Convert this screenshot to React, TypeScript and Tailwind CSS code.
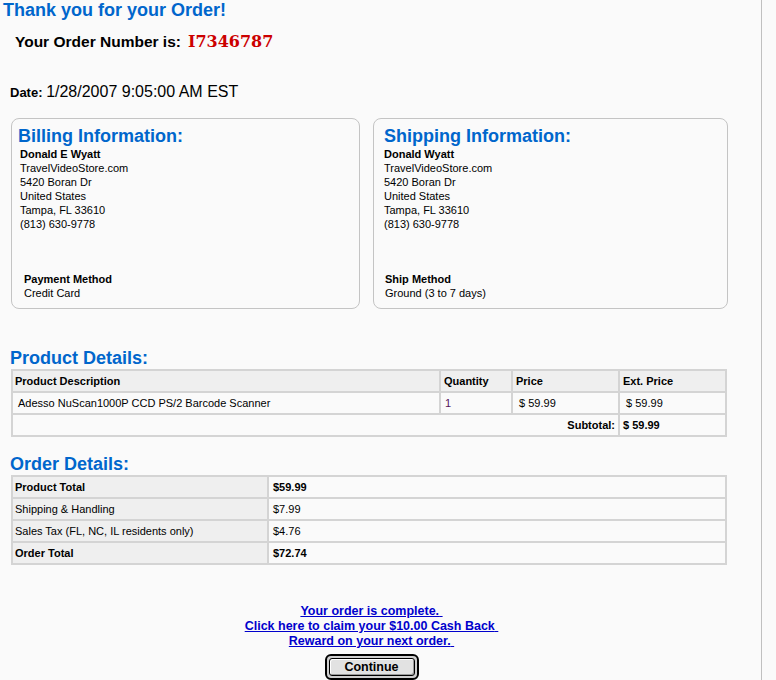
const billing = ["TravelVideoStore.com", "5420 Boran Dr", "United States", "Tampa, FL 33610", "(813) 630-9778"];

const InfoBox = ({
  title,
  name,
  methodLabel,
  method,
  width,
  pad,
  lineIndent,
  methodIndent,
}: {
  title: string;
  name: string;
  methodLabel: string;
  method: string;
  width: string;
  pad: string;
  lineIndent: string;
  methodIndent: string;
}) => {
  return (
    <div className={`${width} ${pad} flex h-[191px] flex-col rounded-[8px] border border-[#c4c4c4] pt-[7px] pb-[8px]`}>
      <h2 className="text-[18px] leading-[21px] font-bold text-[#0066cc]">{title}</h2>
      <div className={`${lineIndent} text-[11px] leading-[14px]`}>
        <div className="font-bold">{name}</div>
        {billing.map((l) => (
          <div key={l}>{l}</div>
        ))}
      </div>
      <div className={`${methodIndent} mt-auto text-[11px] leading-[14px]`}>
        <div className="font-bold">{methodLabel}</div>
        <div>{method}</div>
      </div>
    </div>
  );
};

const orderRows = [
  { label: "Product Total", value: "$59.99", bold: true },
  { label: "Shipping & Handling", value: "$7.99", bold: false },
  { label: "Sales Tax (FL, NC, IL residents only)", value: "$4.76", bold: false },
  { label: "Order Total", value: "$72.74", bold: true },
];

export default function App() {
  const cell = "border-r-2 border-b-2 border-[#d4d4d4] p-0 leading-[20px] text-left align-middle";

  return (
    <div className="min-h-[680px] w-full bg-[#fafafa] font-['Liberation_Sans',Arial,sans-serif] text-black">
      <div className="min-h-[680px] w-[762px] border-r border-[#c0c0c0]">
        <h1 className="pl-[3px] text-[18px] leading-[21px] font-bold text-[#0066cc]">Thank you for your Order!</h1>

        <div className="mt-[12px] pl-[15px] text-[15.5px] leading-[18px] font-bold">
          Your Order Number is:
          <span className="ml-[7px] font-['DejaVu_Serif',serif] text-[16px] text-[#cc0000]">I7346787</span>
        </div>

        <div className="mt-[31px] pl-[10px] leading-[19px]">
          <span className="text-[13px] font-bold">Date: </span>
          <span className="text-[16px]">1/28/2007 9:05:00 AM EST</span>
        </div>

        <div className="mt-[16px] flex gap-[13px] pl-[11px]">
          <InfoBox
            title="Billing Information:"
            name="Donald E Wyatt"
            methodLabel="Payment Method"
            method="Credit Card"
            width="w-[349px]"
            pad="pl-[6px]"
            lineIndent="ml-[2px]"
            methodIndent="ml-[6px]"
          />
          <InfoBox
            title="Shipping Information:"
            name="Donald Wyatt"
            methodLabel="Ship Method"
            method="Ground (3 to 7 days)"
            width="w-[355px]"
            pad="pl-[10px]"
            lineIndent="ml-0"
            methodIndent="ml-[1px]"
          />
        </div>

        <h2 className="mt-[39px] ml-[10px] text-[18px] leading-[21px] font-bold text-[#0066cc]">Product Details:</h2>
        <table className="ml-[11px] w-[716px] table-fixed border-separate border-spacing-0 border-t-2 border-l-2 border-[#d4d4d4] text-[11px]">
          <thead>
            <tr className="bg-[#efefef] font-bold">
              <th className={`${cell} w-[428px] pl-[2px] font-bold`}>Product Description</th>
              <th className={`${cell} w-[72px] pl-[3px] font-bold`}>Quantity</th>
              <th className={`${cell} w-[107px] pl-[3px] font-bold`}>Price</th>
              <th className={`${cell} w-[107px] pl-[3px] font-bold`}>Ext. Price</th>
            </tr>
          </thead>
          <tbody>
            <tr>
              <td className={`${cell} pl-[5px]`}>Adesso NuScan1000P CCD PS/2 Barcode Scanner</td>
              <td className={`${cell} pl-[4px] text-[#55145c]`}>1</td>
              <td className={`${cell} pl-[3px]`}>{"\u00a0$ 59.99"}</td>
              <td className={`${cell} pl-[3px]`}>{"\u00a0$ 59.99"}</td>
            </tr>
            <tr className="font-bold">
              <td colSpan={3} className={`${cell} pr-[3px] text-right`}>
                Subtotal:
              </td>
              <td className={`${cell} pl-[3px]`}>$ 59.99</td>
            </tr>
          </tbody>
        </table>

        <h2 className="mt-[17px] ml-[10px] text-[18px] leading-[21px] font-bold text-[#0066cc]">Order Details:</h2>
        <table className="ml-[11px] w-[716px] table-fixed border-separate border-spacing-0 border-t-2 border-l-2 border-[#d4d4d4] text-[11px]">
          <tbody>
            {orderRows.map((r, i) => (
              <tr key={r.label} className={r.bold ? "font-bold" : ""}>
                <td className={`${cell} ${i === 0 ? "w-[256px]" : ""} bg-[#efefef] pl-[2px]`}>{r.label}</td>
                <td className={`${cell} ${i === 0 ? "w-[458px]" : ""} pl-[4px]`}>{r.value}</td>
              </tr>
            ))}
          </tbody>
        </table>

        <div className="mt-[39px] w-[743px] text-center text-[12.5px] leading-[15px] font-bold">
          <a href="#" className="text-[#0000cc] underline">
            Your order is complete.{"\u00a0"}
            <br />
            Click here to claim your $10.00 Cash Back{"\u00a0"}
            <br />
            Reward on your next order.{"\u00a0"}
          </a>
        </div>

        <div className="w-[743px]">
          <button className="mx-auto mt-[5px] block h-[26px] w-[94px] rounded-[6px] border-2 border-black bg-[#cfcfcf] p-[2px]">
            <span className="flex h-full w-full items-center justify-center rounded-[3px] border border-black bg-[#e2e2e2] text-[12.5px] font-bold shadow-[inset_1px_1px_0_#ffffff,inset_-1px_-1px_0_#9a9a9a]">
              Continue
            </span>
          </button>
        </div>
      </div>
    </div>
  );
}
